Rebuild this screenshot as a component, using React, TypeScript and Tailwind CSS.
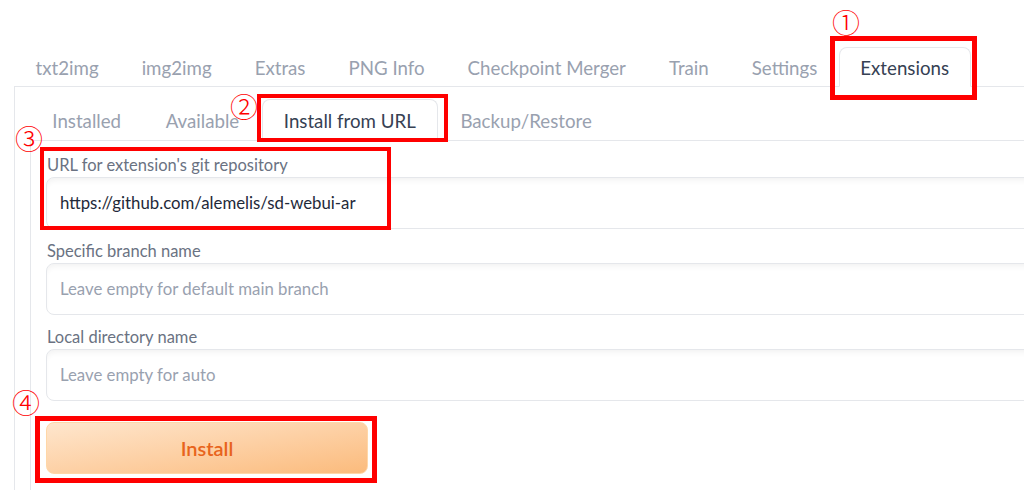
import React from "react";

const topTabs = ["txt2img", "img2img", "Extras", "PNG Info", "Checkpoint Merger", "Train", "Settings", "Extensions"];
const subTabs = ["Installed", "Available", "Install from URL", "Backup/Restore"];

function Tab({ label, active, box }: { label: string; active: boolean; box: string }) {
  return (
    <div
      className={`${box} flex items-center border rounded-t-lg -mb-px relative text-[18.7px] ${
        active ? "bg-white border-gray-200 border-b-white text-gray-700" : "border-transparent text-gray-400"
      }`}
    >
      {label}
    </div>
  );
}

function Field({ label, value, placeholder }: { label: string; value?: string; placeholder?: string }) {
  return (
    <div className="flex flex-col">
      <div className="h-[20px] leading-[20px] text-[16.5px] text-gray-500 pl-px">{label}</div>
      <div className="mt-[2px] h-[52px] rounded-lg border border-gray-200 bg-white shadow-[inset_0_5px_6px_-3px_rgba(0,0,0,0.06)] px-[13px] flex items-center text-[16.8px]">
        {value ? <span className="text-gray-800">{value}</span> : <span className="text-gray-400">{placeholder}</span>}
      </div>
    </div>
  );
}

function Mark({ n, x, y }: { n: string; x: string; y: string }) {
  return (
    <span
      className={`absolute ${x} ${y} w-[30px] h-[30px] flex items-center justify-center text-[28px] leading-none text-[#ff0000]`}
      style={{ fontFamily: '"Noto Sans CJK JP", sans-serif', fontWeight: 300 }}
    >
      {n}
    </span>
  );
}

export default function App() {
  return (
    <div className="relative w-[1024px] h-[490px] overflow-hidden bg-white" style={{ fontFamily: "Lato, sans-serif" }}>
      <div className="w-[1200px] pl-[14px] pt-[47px]">
        <div className="flex">
          {topTabs.map((t) => (
            <Tab key={t} label={t} active={t === "Extensions"} box="h-[40px] px-[20.5px] pt-[3px]" />
          ))}
        </div>
        <div className="border-l border-t border-gray-200 pl-[15px] pt-[12px] h-[420px]">
          <div className="flex">
            {subTabs.map((t) => (
              <Tab key={t} label={t} active={t === "Install from URL"} box="h-[42px] px-[21.3px] pt-[2px]" />
            ))}
          </div>
          <div className="border-l border-t border-gray-200 pl-[15px] pt-[14px] h-[360px] flex flex-col gap-[12px]">
            <Field label="URL for extension's git repository" value="https://github.com/alemelis/sd-webui-ar" />
            <Field label="Specific branch name" placeholder="Leave empty for default main branch" />
            <Field label="Local directory name" placeholder="Leave empty for auto" />
            <button className="mt-[9px] w-[322px] h-[52px] rounded-lg border border-orange-200 bg-linear-to-br from-[#fee6cd] to-[#fbbb7c] text-[#e8641c] text-[20px] font-semibold">
              Install
            </button>
          </div>
        </div>
      </div>

      <div className="absolute left-[830px] top-[36px] w-[147px] h-[64px] border-[5px] border-[#ff0000]" />
      <div className="absolute left-[257px] top-[94px] w-[191px] h-[48px] border-4 border-[#ff0000]" />
      <div className="absolute left-[40px] top-[147px] w-[351px] h-[83px] border-4 border-[#ff0000]" />
      <div className="absolute left-[35px] top-[416px] w-[342px] h-[67px] border-[5px] border-[#ff0000]" />

      <Mark n="①" x="left-[831px]" y="top-[7px]" />
      <Mark n="②" x="left-[229px]" y="top-[91px]" />
      <Mark n="③" x="left-[14px]" y="top-[123px]" />
      <Mark n="④" x="left-[11px]" y="top-[387px]" />
    </div>
  );
}
